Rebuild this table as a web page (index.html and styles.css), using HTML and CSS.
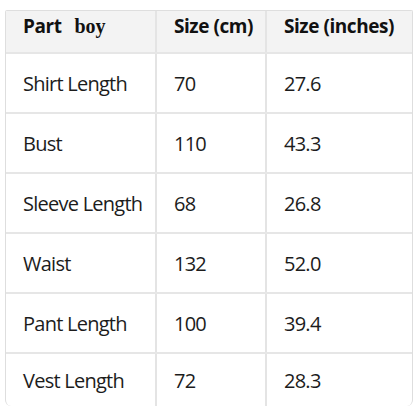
FILE: index.html
```html
<!DOCTYPE html>
<html>
<head>
<meta charset="utf-8">
<link rel="stylesheet" href="styles.css">
</head>
<body>
<div class="frame">
<table class="size-table">
  <colgroup>
    <col class="c1"><col class="c2"><col class="c3">
  </colgroup>
  <thead>
    <tr><th>Part<span class="boy">boy</span></th><th>Size (cm)</th><th>Size (inches)</th></tr>
  </thead>
  <tbody>
    <tr><td>Shirt Length</td><td>70</td><td>27.6</td></tr>
    <tr><td>Bust</td><td>110</td><td>43.3</td></tr>
    <tr><td>Sleeve Length</td><td>68</td><td>26.8</td></tr>
    <tr><td>Waist</td><td>132</td><td>52.0</td></tr>
    <tr><td>Pant Length</td><td>100</td><td>39.4</td></tr>
    <tr class="last"><td>Vest Length</td><td>72</td><td>28.3</td></tr>
  </tbody>
</table>
</div>
</body>
</html>
```
FILE: styles.css
```css
html, body { margin: 0; padding: 0; background: #fff; }
body { padding: 10px 3px 0 5px; height: 416px; box-sizing: border-box; overflow: hidden; }
.frame {
  width: 408px;
  border: 1px solid #dedede;
  border-bottom: none;
  border-radius: 2px 2px 6px 6px;
  overflow: hidden;
  box-sizing: border-box;
}
.size-table {
  width: 100%;
  border-collapse: collapse;
  table-layout: fixed;
  font-family: "Open Sans", "Noto Sans", sans-serif;
  color: #1c1c1c;
}
.c1 { width: 150px; }
.c2 { width: 110px; }
.c3 { width: auto; }
th, td {
  text-align: left;
  padding: 0 0 0 17px;
  border-left: 2px solid #e4e4e4;
  border-bottom: 2px solid #e6e6e6;
}
th:first-child, td:first-child { border-left: none; }
th {
  height: 42px;
  background: #f3f3f3;
  font-weight: 700;
  font-size: 19px;
  letter-spacing: -0.45px;
  line-height: 24px;
  vertical-align: top;
  padding-top: 3px;
  box-sizing: border-box;
  color: #111;
}
td {
  height: 60px;
  font-size: 20px;
  letter-spacing: -0.75px;
  vertical-align: middle;
  box-sizing: border-box;
}
.last td { border-bottom: none; height: 53px; }
.boy {
  font-family: "Liberation Serif", serif;
  font-weight: 700;
  font-size: 20px;
  letter-spacing: 0;
  margin-left: 13px;
}
```
